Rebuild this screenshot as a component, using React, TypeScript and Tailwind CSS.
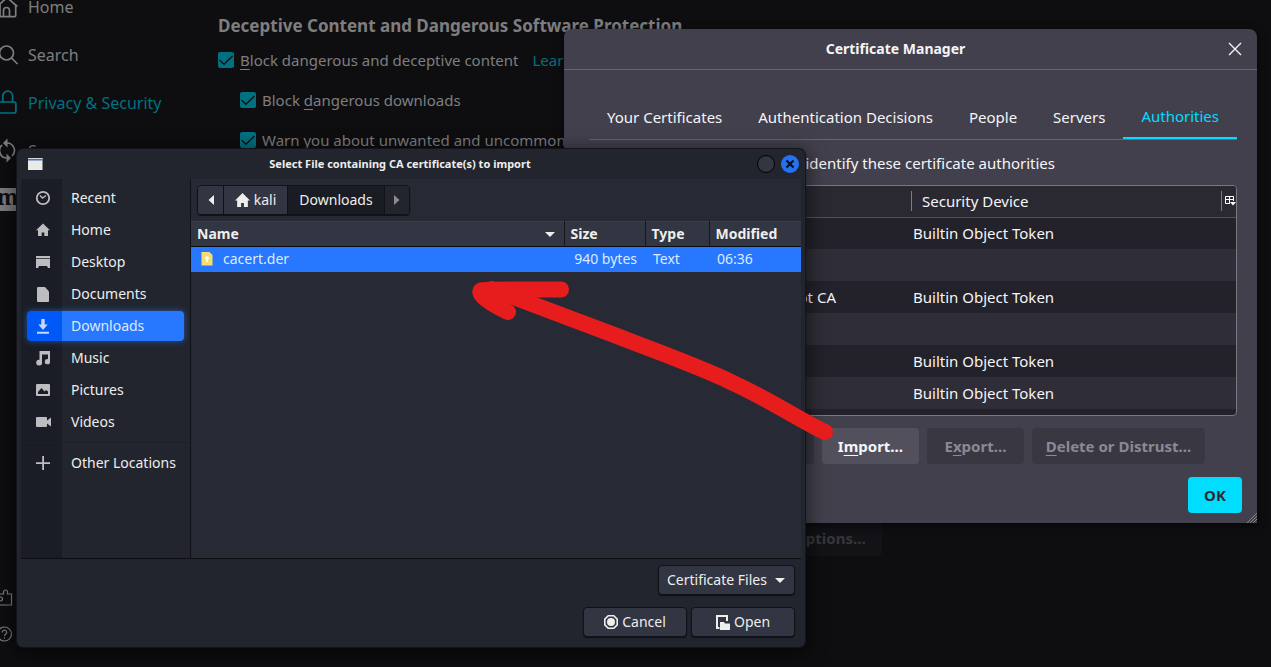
import React from "react";

function Check({ children, indent = false, extra }: { children: React.ReactNode; indent?: boolean; extra?: React.ReactNode }) {
  return (
    <div className={indent ? "flex items-center pl-[22px]" : "flex items-center"}>
      <label className="flex items-center gap-1.5 whitespace-nowrap">
        <span className="grid size-4">
          <input type="checkbox" defaultChecked className="col-start-1 row-start-1 size-4 appearance-none rounded-xs bg-[#007181]" />
          <svg viewBox="0 0 16 16" className="pointer-events-none col-start-1 row-start-1 size-4" fill="none" stroke="#0e0e10" strokeWidth="1.3">
            <path d="M1.500 8 6 12.300 14.500 4" />
          </svg>
        </span>
        <span>{children}</span>
      </label>
      {extra}
    </div>
  );
}

const U = ({ children }: { children: React.ReactNode }) => <span className="underline underline-offset-3">{children}</span>;

const navIcons = {
  home: (
    <path d="M-1 9.500 8.200 1.200a1.200 1.200 0 0 1 1.600 0L19.300 9.500M2 7.500V18.500a1.200 1.200 0 0 0 1.200 1.200h13.300A1.200 1.200 0 0 0 17.700 18.500V8M5.500 19.500V13.500a3 3 0 0 1 6 0V19.500" />
  ),
  search: <path d="M15.500 8a7 7 0 1 1-14 0 7 7 0 0 1 14 0zM13.500 13l6 6" />,
  lock: <path d="M4.800 9V3a4.900 4.900 0 0 1 9.800 0v6M2 9h13.900a2 2 0 0 1 2 2v7a2 2 0 0 1-2 2H2a2 2 0 0 1-2-2v-7a2 2 0 0 1 2-2z" />,
  sync: (
    <g>
      <path d="M9 2A7.500 7.500 0 0 1 14 15M9 17A7.500 7.500 0 0 1 4 4" />
      <path d="M9.500-2.500v9l-4.500-4.500zM8.500 12.500v9l4.500-4.500z" fill="currentColor" stroke="none" />
    </g>
  ),
};

function NavItem({ icon, label, active = false }: { icon: React.ReactNode; label: string; active?: boolean }) {
  return (
    <a href="#" className={active ? "flex h-12 items-center gap-2.5 text-[#007181]" : "flex h-12 items-center gap-2.5"}>
      <svg viewBox="0 0 20 20" className="size-5 overflow-visible" fill="none" stroke="currentColor" strokeWidth="1.7">
        {icon}
      </svg>
      {label}
    </a>
  );
}

function SettingsPage() {
  return (
    <div className="flex h-full text-[#7e7e80]">
      <nav className="-mt-[17px] -ml-0.5 flex w-[220px] shrink-0 flex-col text-base leading-[14px]">
        <NavItem icon={navIcons.home} label="Home" />
        <NavItem icon={navIcons.search} label="Search" />
        <NavItem icon={navIcons.lock} label="Privacy & Security" active />
        <NavItem icon={navIcons.sync} label="Sync" />
        <a href="#" aria-label="More products" className="flex h-12 items-center">
          <span className="flex h-[23px] w-[19px] items-center justify-center overflow-hidden bg-[#7e7e80] pb-1.5 font-['Noto_Serif','DejaVu_Serif',serif] text-[22px] leading-[17px] font-bold text-[#0e0e10]">m</span>
        </a>
        <div className="mt-auto flex flex-col gap-4 pb-[23px]">
          <a href="#" aria-label="Extensions" className="block">
            <svg viewBox="0 0 20 20" className="size-5 overflow-visible" fill="none" stroke="currentColor" strokeWidth="1.2">
              <path d="M-2 6h7.500V4a2 2 0 0 1 4 0v2H13.500v11H1v-4h1.500a2 2 0 0 0 0-4H-2" />
            </svg>
          </a>
          <a href="#" aria-label="Help" className="block">
            <svg viewBox="0 0 20 20" className="size-5 overflow-visible" fill="none" stroke="currentColor" strokeWidth="1.2">
              <circle cx="6.500" cy="10" r="7" />
              <path d="M4.300 8.500a2.200 2.200 0 1 1 3.500 1.600c-.8.600-1.300 1-1.300 2" />
              <path d="M6.500 13.200v1.300" />
            </svg>
          </a>
        </div>
      </nav>
      <main className="flex min-w-0 flex-1 flex-col items-start pt-3.5">
        <h2 className="text-[17px] leading-6 font-bold whitespace-nowrap">Deceptive Content and Dangerous Software Protection</h2>
        <div className="mt-2.5 flex flex-col gap-4 text-[15px] leading-6">
          <Check extra={<a href="#" className="ml-3.5 whitespace-nowrap text-[#007181]">Learn more</a>}>
            <U>B</U>lock dangerous and deceptive content
          </Check>
          <Check indent>
            Block <U>d</U>angerous downloads
          </Check>
          <Check indent>
            Warn you about unwanted and un<U>c</U>ommon software
          </Check>
        </div>
        <button type="button" disabled className="mt-[368px] ml-[560px] h-9 rounded bg-[#121217] px-4 text-[15px] font-bold text-[#36363a]">
          Options…
        </button>
      </main>
    </div>
  );
}

const tabs = ["Your Certificates", "Authentication Decisions", "People", "Servers", "Authorities"];

const certificates = [
  { name: "", device: "Builtin Object Token" },
  { name: "", device: "" },
  { name: "Root CA", device: "Builtin Object Token" },
  { name: "", device: "" },
  { name: "", device: "Builtin Object Token" },
  { name: "", device: "Builtin Object Token" },
];

function CertificateManager() {
  return (
    <section className="absolute top-[29px] right-3.5 left-[564px] flex flex-col rounded-t-lg bg-[#42404c] pb-2.5 text-[15px] text-[#f5f5f8] shadow-[0_2px_10px_rgba(0,0,0,0.6)]">
      <header className="flex h-[41px] items-center border-b border-[#67656f] pr-3.5">
        <h1 className="flex-1 text-center text-sm font-bold">Certificate Manager</h1>
        <button type="button" aria-label="Close" className="grid size-4 place-items-center">
          <svg viewBox="0 0 16 16" className="size-4" fill="none" stroke="currentColor" strokeWidth="1.4">
            <path d="M2 2l12 12M14 2 2 14" />
          </svg>
        </button>
      </header>
      <div className="flex flex-col pr-5 pl-[25px]">
        <div role="tablist" className="mt-[26px] flex h-11 border-b border-[#67656f]">
          {tabs.map((t) => (
            <button
              key={t}
              type="button"
              role="tab"
              aria-selected={t === "Authorities"}
              className={
                t === "Authorities"
                  ? "flex-auto border-b-2 border-[#00ddff] text-[#00ddff]"
                  : "flex-auto"
              }
            >
              {t}
            </button>
          ))}
        </div>
        <p className="flex h-[45px] items-center justify-end pt-0.5 pr-[182px] whitespace-nowrap">
          You have certificates on file that identify these certificate authorities
        </p>
        <div className="h-[231px] overflow-hidden rounded border border-[#7b7a84] bg-[#23222b]">
          <table className="w-full table-fixed border-collapse text-left">
            <colgroup>
              <col className="w-[321px]" />
              <col />
              <col className="w-[15px]" />
            </colgroup>
            <thead>
              <tr className="h-[31px] border-b border-[#53525b] bg-[#2a2932]">
                <th aria-label="Certificate" />
                <th className="p-0 font-normal">
                  <div className="flex h-5 items-center border-l border-[#7b7a84] pl-2.5">Security Device</div>
                </th>
                <th className="p-0">
                  <button type="button" aria-label="Choose columns" className="flex h-5 items-center border-l border-[#7b7a84] pl-[3px]">
                    <svg viewBox="0 0 11 10" className="h-[10px] w-[11px]" fill="none" stroke="#fff" strokeWidth="1">
                      <path d="M5 7.500H.500v-7h8V5M.500 3.500h8M4.500.500v7" />
                      <path d="M5 6h6L8 9.500z" fill="#fff" stroke="none" />
                    </svg>
                  </button>
                </th>
              </tr>
            </thead>
            <tbody>
              {certificates.map((c, i) => (
                <tr key={i} className="h-8 even:bg-[#2f2d37]">
                  <td className="p-0 pr-[75px] text-right">{c.name}</td>
                  <td className="p-0 pl-0.5" colSpan={2}>{c.device}</td>
                </tr>
              ))}
            </tbody>
          </table>
        </div>
        <div className="mt-3 flex gap-2 font-bold">
          <button type="button" disabled className="h-9 w-[85px] rounded bg-[#393742] text-[#8b8994]"><U>V</U>iew…</button>
          <button type="button" disabled className="h-9 w-[132px] rounded bg-[#393742] text-[#8b8994]"><U>E</U>dit Trust…</button>
          <button type="button" className="h-9 w-[97px] rounded bg-[#51505c]">I<U>m</U>port…</button>
          <button type="button" disabled className="h-9 w-[97px] rounded bg-[#393742] text-[#8b8994]">E<U>x</U>port…</button>
          <button type="button" disabled className="h-9 w-[173px] rounded bg-[#393742] text-[#8b8994]"><U>D</U>elete or Distrust…</button>
        </div>
      </div>
      <div className="mt-[13px] flex justify-end pr-[15px]">
        <button type="button" className="h-9 w-[54px] rounded bg-[#00ddff] font-bold text-[#2b2a33]">OK</button>
      </div>
      <svg viewBox="0 0 10 10" className="absolute right-0 bottom-0 size-2.5" stroke="#85848d" strokeWidth="1">
        <path d="M0 10 10 0M3 10l7-7M6 10l4-4" />
      </svg>
    </section>
  );
}

const places: { label: string; icon: React.ReactNode }[] = [
  {
    label: "Recent",
    icon: (
      <g fill="none" stroke="currentColor">
        <circle cx="8" cy="8" r="6.200" strokeWidth="1.800" />
        <path d="M5 5.500 7.500 8l3.500-2.500" strokeWidth="1.400" />
      </g>
    ),
  },
  { label: "Home", icon: <path d="M8 1.500 1 8.300h2V14h3.700v-3.500h2.600V14H13V8.300h2z" /> },
  { label: "Desktop", icon: <path d="M1 2h14v2.200H1zM1 5h14v9h-2l-1-2H4l-1 2H1z" /> },
  { label: "Documents", icon: <path d="M2 2a1 1 0 0 1 1-1h7l4 4.500V15a1 1 0 0 1-1 1H3a1 1 0 0 1-1-1z" /> },
  { label: "Downloads", icon: <path d="M6.300 1h3.400v5.500h3L8 12 3.300 6.500h3zM2 13.700h12v2H2z" /> },
  {
    label: "Music",
    icon: <path d="M4.500 1H15v10.700a2.600 2.600 0 1 1-2-2.500V4.500H7v7.700a2.900 2.900 0 1 1-2.500-2.500z" />,
  },
  { label: "Pictures", icon: <path fillRule="evenodd" d="M2 2h12a1 1 0 0 1 1 1v10a1 1 0 0 1-1 1H2a1 1 0 0 1-1-1V3a1 1 0 0 1 1-1zM3 12h10V9.500L11 8 9.500 9.500 6.500 6 3 10z" /> },
  { label: "Videos", icon: <path d="M2 3h9a1 1 0 0 1 1 1v2.500L16 3.500v9L12 9.500V12a1 1 0 0 1-1 1H2a1 1 0 0 1-1-1V4a1 1 0 0 1 1-1z" /> },
];

function PlaceIcon({ children }: { children: React.ReactNode }) {
  return (
    <span className="grid w-[35px] place-items-center pr-[3px]">
      <svg viewBox="0 0 16 16" className="size-4" fill="currentColor">{children}</svg>
    </span>
  );
}

function Places() {
  return (
    <nav className="flex w-[170px] shrink-0 flex-col border-r border-[#0f1116] bg-linear-[90deg,#1a1d25_41px,#22252e_41px] px-1.5 pt-[3px]">
      {places.map((p) => (
        <button
          key={p.label}
          type="button"
          className={
            p.label === "Downloads"
              ? "my-px flex h-[30px] items-stretch rounded bg-linear-[90deg,#0058f6_35px,#2777ff_35px] text-[#c4d9ff] shadow-[0_0_6px_rgba(39,119,255,0.6)]"
              : "my-px flex h-[30px] items-stretch text-[#bdbdbf]"
          }
        >
          <PlaceIcon>{p.icon}</PlaceIcon>
          <span className={p.label === "Downloads" ? "self-center pl-[9px] text-[#dce8ff]" : "self-center pl-[9px] text-[#eeeeec]"}>{p.label}</span>
        </button>
      ))}
      <hr className="-mx-1.5 my-1 border-[#1e2028]" />
      <button type="button" className="my-px flex h-[30px] items-stretch whitespace-nowrap text-[#bdbdbf]">
        <PlaceIcon>
          <path d="M7.200 1h1.800v6.200H15v1.800H9V15H7.200V9H1V7.200h6.200z" />
        </PlaceIcon>
        <span className="self-center pl-[9px] text-[#eeeeec]">Other Locations</span>
      </button>
    </nav>
  );
}

const dialogButton =
  "flex h-[30px] items-center justify-center rounded border border-[#101217] bg-[#323542] text-[#eeeeec] shadow-[0_1px_1px_rgba(0,0,0,0.6)]";

function FileChooser() {
  return (
    <section className="absolute top-[149px] left-[17px] flex h-[498px] w-[788px] flex-col rounded-md bg-[#22252e] px-1 text-sm text-[#eeeeec] shadow-[0_0_0_1px_#14151a,0_4px_18px_4px_rgba(0,0,0,0.5)]">
      <header className="flex h-[30px] items-center pr-0.5 pl-1.5">
        <svg viewBox="0 0 16 12" className="h-3 w-4">
          <rect x="1" width="14.500" height="12" fill="#e9ebe6" />
          <rect x="1" width="14.500" height="1" fill="#d3d9e6" />
          <rect x="1" y="1" width="14.500" height="1.500" fill="#4a73b5" />
        </svg>
        <h2 className="flex-1 text-center text-[11px] font-bold">Select File containing CA certificate(s) to import</h2>
        <div className="flex gap-1.5">
          <button type="button" aria-label="Maximize" className="size-[18px] rounded-full border border-black bg-[#323542]" />
          <button type="button" aria-label="Close window" className="grid size-[18px] place-items-center rounded-full bg-[#2472f2]">
            <svg viewBox="0 0 10 10" className="size-2.5" stroke="#0b0f18" strokeWidth="2.200">
              <path d="M1.500 1.500l7 7M8.500 1.500l-7 7" />
            </svg>
          </button>
        </div>
      </header>
      <div className="flex min-h-0 flex-1 border-b border-[#0c0d11]">
        <Places />
        <div className="min-w-0 flex-1 bg-[#272a34]">
          <div className="flex h-[42px] px-1.5 pt-1.5">
            <div className="flex h-[30px] overflow-hidden rounded border border-[#101217] shadow-[0_1px_1px_rgba(0,0,0,0.6)]">
              <button type="button" aria-label="Back" className="grid w-[25px] place-items-center bg-[#323542]">
                <svg viewBox="0 0 6 10" className="h-2.5 w-1.5" fill="currentColor"><path d="M6 0v10L.5 5z" /></svg>
              </button>
              <button type="button" className="flex w-16 items-center justify-center gap-1 border-l border-[#101217] bg-[#323542]">
                <svg viewBox="1 1 14 13" className="h-[14px] w-[15px]" fill="currentColor"><path d="M8 1 1 8h2v6h3.700v-3.700h2.600V14H13V8h2z" /></svg>
                kali
              </button>
              <button type="button" className="w-[97px] border-l border-[#101217] bg-[#1a1c23]">Downloads</button>
              <button type="button" aria-label="Forward" className="grid w-[25px] place-items-center border-l border-[#101217] bg-[#22252e] text-[#8a8b8e]">
                <svg viewBox="0 0 6 10" className="h-2.5 w-1.5" fill="currentColor"><path d="M0 0v10l5.500-5z" /></svg>
              </button>
            </div>
          </div>
          <table className="w-full table-fixed border-collapse text-left whitespace-nowrap">
            <colgroup>
              <col />
              <col className="w-[81px]" />
              <col className="w-16" />
              <col className="w-[92px]" />
            </colgroup>
            <thead>
              <tr className="h-[25px] border-t border-b border-t-[#3b3e49] border-b-[#0a0b0e] bg-[#323542]">
                <th className="p-0 pl-1.5">
                  <div className="flex items-center justify-between pr-[9px]">
                    Name
                    <svg viewBox="0 0 10 6" className="h-[5px] w-2.5" preserveAspectRatio="none" fill="currentColor"><path d="M0 0h10L5 6z" /></svg>
                  </div>
                </th>
                <th className="border-l border-[#15171d] p-0 pl-1.5">Size</th>
                <th className="border-l border-[#15171d] p-0 pl-1.5">Type</th>
                <th className="border-l border-[#15171d] p-0 pl-1.5">Modified</th>
              </tr>
            </thead>
            <tbody>
              <tr className="h-[25px] bg-[#2777ff] text-[#dfeaff]">
                <td className="p-0 pl-2">
                  <div className="flex items-center gap-2">
                    <svg viewBox="0 0 16 16" className="size-4">
                      <path d="M2.500 1h8L13.500 4v10.500H2.500z" fill="#f7dc6f" />
                      <path d="M8 5a2 2 0 0 0-1 3.700V11h2V8.700A2 2 0 0 0 8 5z" fill="#fffbe6" />
                    </svg>
                    cacert.der
                  </div>
                </td>
                <td className="p-0 pr-2 text-right">940 bytes</td>
                <td className="p-0 pl-2">Text</td>
                <td className="p-0 pl-2">06:36</td>
              </tr>
            </tbody>
          </table>
        </div>
      </div>
      <footer className="flex flex-col items-end gap-3 px-1.5 pt-1.5 pb-2.5">
        <label className="grid w-[137px] items-center">
          <select aria-label="File type" className={dialogButton + " col-start-1 row-start-1 w-full appearance-none pl-2"}>
            <option>Certificate Files</option>
          </select>
          <svg viewBox="0 0 10 6" className="pointer-events-none col-start-1 row-start-1 mr-2.5 h-[5px] w-2.5 justify-self-end" preserveAspectRatio="none" fill="currentColor"><path d="M0 0h10L5 6z" /></svg>
        </label>
        <div className="flex gap-1">
          <button type="button" className={dialogButton + " w-[104px] gap-1"}>
            <svg viewBox="0 0 14 14" className="size-3.5">
              <path d="M4.200.8h5.600l3.400 3.400v5.600l-3.400 3.400H4.200L.8 9.800V4.200z" fill="none" stroke="#eeeeec" strokeWidth="1.600" />
              <circle cx="7" cy="7" r="4" fill="#eeeeec" />
            </svg>
            Cancel
          </button>
          <button type="button" className={dialogButton + " w-[104px] gap-1"}>
            <svg viewBox="0 0 14 15" className="h-[15px] w-3.5">
              <path d="M3.500 13H1V1h10v5" fill="none" stroke="#eeeeec" strokeWidth="2" />
              <path d="M4 15V7h4l1 1.500h5V15z" fill="#eeeeec" />
            </svg>
            Open
          </button>
        </div>
      </footer>
    </section>
  );
}

export default function App() {
  return (
    <div className="relative h-screen w-full overflow-hidden bg-[#0e0e10] font-['Noto_Sans',sans-serif]">
      <SettingsPage />
      <CertificateManager />
      <FileChooser />
      <svg viewBox="0 0 370 160" className="pointer-events-none absolute top-[280px] left-[470px] h-[160px] w-[370px]" fill="none" stroke="#e71d1d" strokeWidth="16" strokeLinecap="round" strokeLinejoin="round">
        <path d="M355 152C330 140 300 120 263 103C233 88 185 71 147 56L22 9" />
        <path d="M91 9.500C60 9.500 30 9 14 10C5 10 12 20 38 32" />
      </svg>
    </div>
  );
}
